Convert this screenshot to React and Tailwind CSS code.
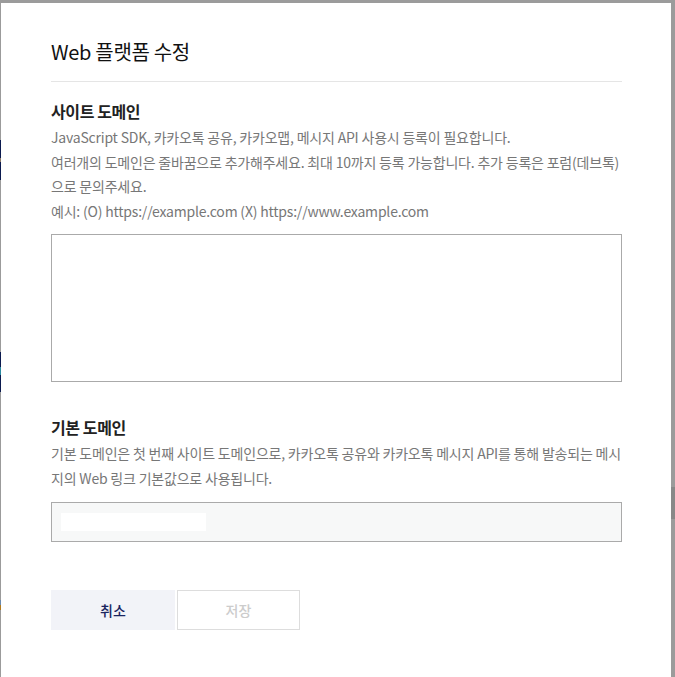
export default function App() {
  const font = { fontFamily: '"Noto Sans CJK KR", "Noto Sans", sans-serif' };
  return (
    <div className="w-[675px] h-[677px] bg-[#9b9b9b] flex flex-col overflow-hidden" style={font}>
      <div className="h-[3px] shrink-0" />
      <div className="flex flex-1 min-h-0">
        <div className="w-px flex flex-col">
          <div className="h-[137px]" />
          <div className="h-[18px] bg-[#0b1a4f]" />
          <div className="h-[4px] bg-[#8a7a6a]" />
          <div className="h-[18px] bg-[#0b1a4f]" />
          <div className="h-[172px]" />
          <div className="h-[15px] bg-[#0b1a4f]" />
          <div className="h-[8px] bg-[#2a8aa0]" />
          <div className="h-[17px] bg-[#0b1a4f]" />
          <div className="h-[208px]" />
          <div className="h-[5px] bg-[#6a8ab0]" />
          <div className="h-[5px] bg-[#b07a20]" />
        </div>
        <div className="w-[670px] bg-white pl-[50px] pr-[49px] pt-[35px] flex flex-col">
          <h1 className="text-[20px] leading-[28px] text-[#111] tracking-[-0.3px] font-normal">Web 플랫폼 수정</h1>
          <div className="mt-[15px] h-px bg-[#e5e5e5]" />
          <h2 className="mt-[17px] text-[16px] leading-[24px] font-bold text-[#222] tracking-[-0.4px]">사이트 도메인</h2>
          <p className="mt-[2px] text-[14px] leading-[24.5px] text-[#777] tracking-[-0.2px]">
            JavaScript SDK, 카카오톡 공유, 카카오맵, 메시지 API 사용시 등록이 필요합니다.
            <br />
            여러개의 도메인은 줄바꿈으로 추가해주세요. 최대 10까지 등록 가능합니다. 추가 등록은 포럼(데브톡)으로 문의주세요.
            <br />
            예시: (O) https://example.com (X) https://www.example.com
          </p>
          <textarea className="mt-[11px] h-[148px] w-full border border-[#aaaaaa] resize-none outline-none bg-white" />
          <h2 className="mt-[33px] text-[16px] leading-[24px] font-bold text-[#222] tracking-[-0.4px]">기본 도메인</h2>
          <p className="mt-[2px] text-[14px] leading-[24.5px] text-[#777] tracking-[-0.2px]">
            기본 도메인은 첫 번째 사이트 도메인으로, 카카오톡 공유와 카카오톡 메시지 API를 통해 발송되는 메시지의 Web 링크 기본값으로 사용됩니다.
          </p>
          <div className="mt-[12px] h-[40px] w-full border border-[#aaaaaa] bg-[#f7f8f8] flex items-center pl-[9px]">
            <div className="w-[145px] h-[18px] bg-white" />
          </div>
          <div className="mt-[48px] flex gap-[2px]">
            <button className="w-[124px] h-[40px] bg-[#f2f3f8] text-[14px] text-[#1a2560] font-medium">취소</button>
            <button className="w-[123px] h-[40px] bg-white border border-[#dddddd] text-[14px] text-[#cccccc] font-medium">저장</button>
          </div>
        </div>
        <div className="flex-1 flex flex-col">
          <div className="h-[484px]" />
          <div className="h-[32px] bg-[#888]" />
        </div>
      </div>
    </div>
  );
}
